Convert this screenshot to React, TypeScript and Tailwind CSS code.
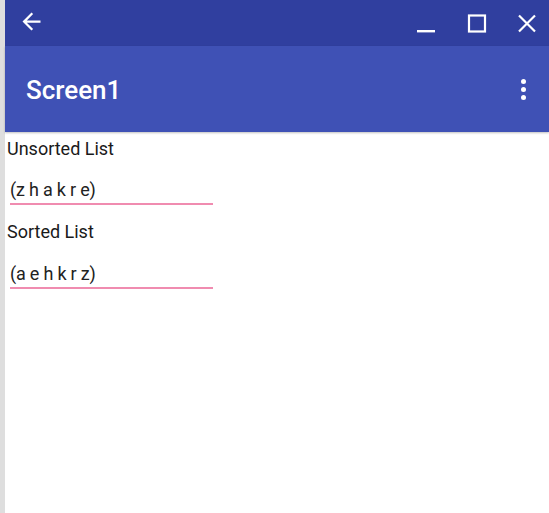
import React from "react";

export default function App() {
  const font = { fontFamily: "Roboto, 'Noto Sans', sans-serif" };
  return (
    <div className="flex w-[549px] h-[513px] bg-white overflow-hidden" style={font}>
      <div className="w-[5px] shrink-0 bg-[#dedede]" />
      <div className="flex flex-col flex-1 min-w-0">
        {/* window bar */}
        <div className="h-[46px] bg-[#303f9f] flex items-center shrink-0">
          <svg width="27" height="27" viewBox="0 0 24 24" className="ml-[13px] mt-[-4px]">
            <path d="M20 11H7.83l5.59-5.59L12 4l-8 8 8 8 1.41-1.41L7.83 13H20v-2z" fill="#fff" />
          </svg>
          <div className="flex-1" />
          <svg width="20" height="20" viewBox="0 0 20 20" className="mr-[31px] mt-[2px]">
            <rect x="1" y="16" width="18" height="2.4" fill="#fff" />
          </svg>
          <svg width="20" height="20" viewBox="0 0 20 20" className="mr-[30px] mt-[2px]">
            <rect x="2" y="1.5" width="16" height="16" fill="none" stroke="#fff" strokeWidth="2.2" />
          </svg>
          <svg width="20" height="20" viewBox="0 0 20 20" className="mr-[12px] mt-[2px]">
            <path d="M2 1.5 L18 17.5 M18 1.5 L2 17.5" stroke="#fff" strokeWidth="2.2" />
          </svg>
        </div>
        {/* toolbar */}
        <div className="h-[86px] bg-[#3f51b5] flex items-center shrink-0 shadow-[0_1px_2px_rgba(0,0,0,0.25)] relative z-10">
          <div className="ml-[21px] text-[26px] font-medium text-white leading-[30px] mt-[2px]">Screen1</div>
          <div className="flex-1" />
          <div className="mr-[23px] flex flex-col gap-[3px] items-center mt-[1px]">
            <div className="w-[5px] h-[5px] rounded-full bg-white" />
            <div className="w-[5px] h-[5px] rounded-full bg-white" />
            <div className="w-[5px] h-[5px] rounded-full bg-white" />
          </div>
        </div>
        {/* content */}
        <div className="flex flex-col pl-[2px] text-[18px] text-[#1a1a1a]">
          <div className="mt-[6px] leading-[21px]">Unsorted List</div>
          <div className="mt-[20px] ml-[3px] w-[203px] leading-[21px] pb-[3px] border-b-2 border-[#f08cb0] text-[#222] tracking-[-0.2px]">
            (z h a k r e)
          </div>
          <div className="mt-[16px] leading-[21px]">Sorted List</div>
          <div className="mt-[21px] ml-[3px] w-[203px] leading-[21px] pb-[3px] border-b-2 border-[#f08cb0] text-[#222] tracking-[-0.2px]">
            (a e h k r z)
          </div>
        </div>
      </div>
    </div>
  );
}
